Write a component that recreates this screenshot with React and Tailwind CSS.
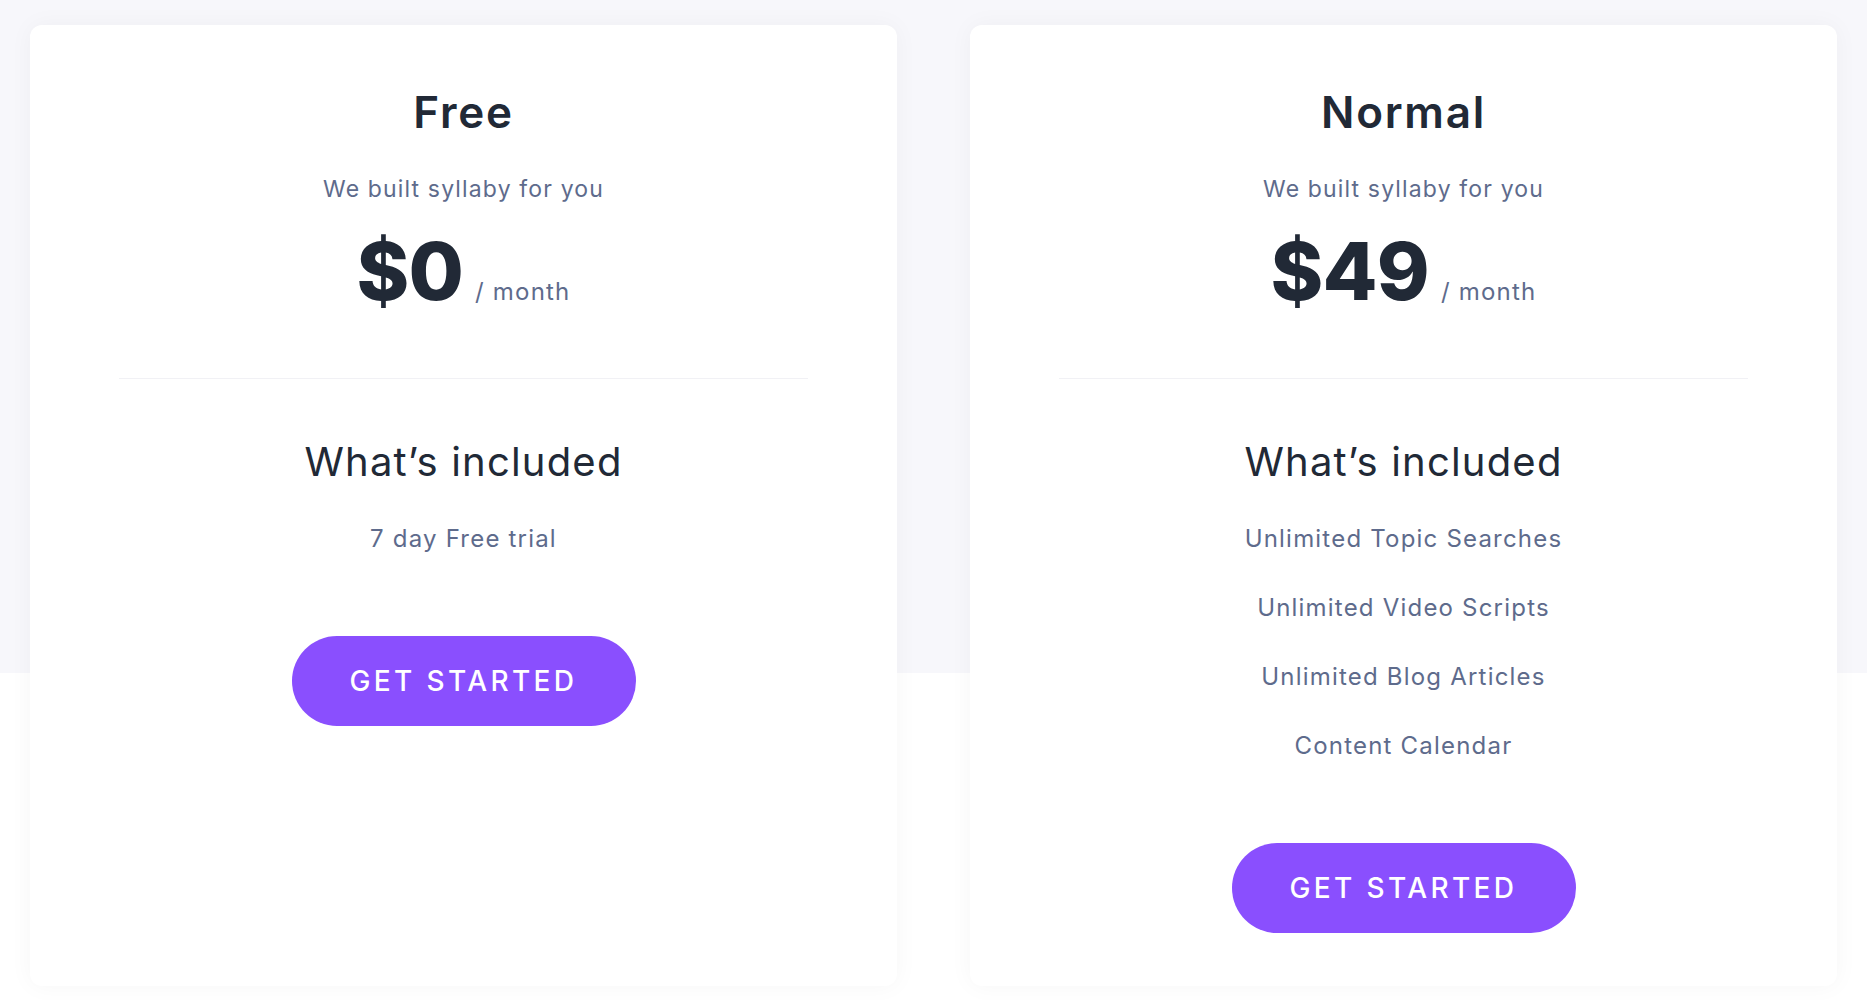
import React from 'react';

const plans = [
  {
    name: 'Free',
    price: '$0',
    features: ['7 day Free trial'],
  },
  {
    name: 'Normal',
    price: '$49',
    features: [
      'Unlimited Topic Searches',
      'Unlimited Video Scripts',
      'Unlimited Blog Articles',
      'Content Calendar',
    ],
  },
];

const PlanCard = ({ plan }) => {
  return (
    <div className="flex flex-col items-center bg-white rounded-[12px] shadow-[0_0_24px_rgba(30,30,60,0.04)] pt-[65px] pb-[53px]">
      <h2 className="text-[44px] leading-[44px] font-semibold tracking-[0.04em] text-[#212936]">{plan.name}</h2>
      <p className="mt-[44px] text-[23px] leading-[23px] tracking-[0.05em] text-[#5e6b8c]">We built syllaby for you</p>

      <div className="mt-[30px] flex items-baseline">
        <span className="text-[80px] leading-[80px] font-extrabold text-[#212936] tracking-[-0.01em]">{plan.price}</span>
        <span className="ml-[12px] text-[24px] leading-[24px] tracking-[0.05em] text-[#5e6b8c]">/ month</span>
      </div>

      <div className="mt-[67px] h-px w-[689px] bg-[#f1f1f5]" />

      <h3 className="mt-[63px] text-[40px] leading-[40px] font-normal tracking-[0.03em] text-[#212936]">What’s included</h3>

      <ul className="mt-[45px] flex flex-col items-center gap-[45px]">
        {plan.features.map((f) => (
          <li key={f} className="text-[24px] leading-[24px] tracking-[0.05em] text-[#5e6b8c]">
            {f}
          </li>
        ))}
      </ul>

      <button className="mt-[85px] w-[344px] h-[90px] rounded-full bg-[#8a4ffe] text-white text-[28px] font-medium tracking-[0.12em] uppercase">
        Get Started
      </button>
    </div>
  );
};

export default function App() {
  return (
    <div className="min-h-screen bg-[linear-gradient(to_bottom,#f7f7fb_673px,#ffffff_673px)] font-['Inter',sans-serif]">
      <div className="grid grid-cols-2 gap-[73px] px-[30px] pt-[25px] items-stretch">
        {plans.map((p) => (
          <PlanCard key={p.name} plan={p} />
        ))}
      </div>
    </div>
  );
}
